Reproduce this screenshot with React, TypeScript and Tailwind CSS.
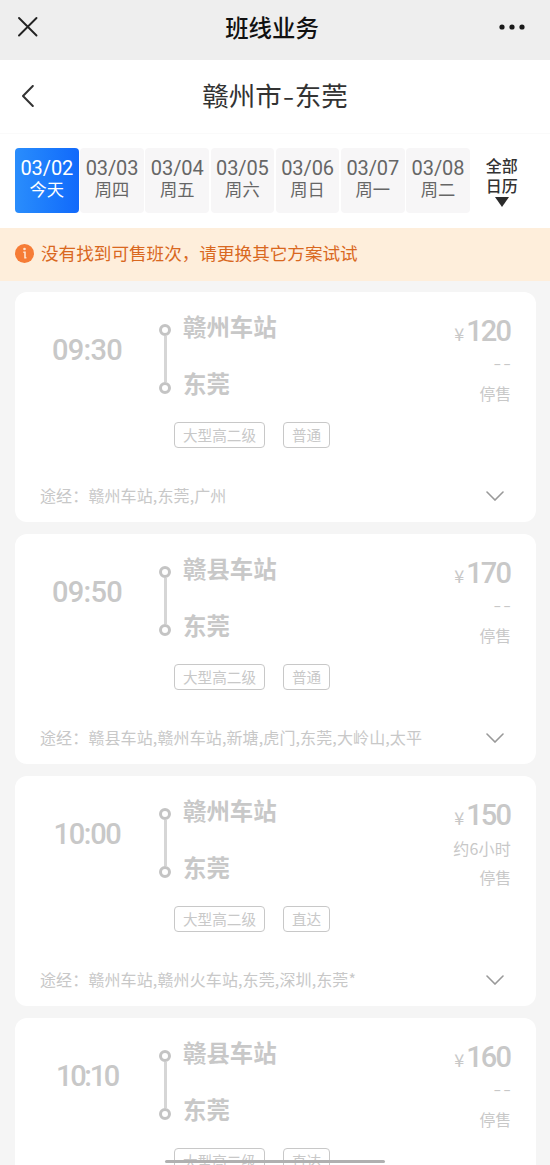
import React, { useState } from 'react';

interface DayItem {
  date: string;
  label: string;
}

interface Trip {
  time: string;
  from: string;
  to: string;
  price: number;
  duration: string;
  tags: string[];
  via: string;
}

const DAYS: DayItem[] = [
  { date: '03/02', label: '今天' },
  { date: '03/03', label: '周四' },
  { date: '03/04', label: '周五' },
  { date: '03/05', label: '周六' },
  { date: '03/06', label: '周日' },
  { date: '03/07', label: '周一' },
  { date: '03/08', label: '周二' },
];

const TRIPS: Trip[] = [
  { time: '09:30', from: '赣州车站', to: '东莞', price: 120, duration: '--', tags: ['大型高二级', '普通'], via: '赣州车站,东莞,广州' },
  { time: '09:50', from: '赣县车站', to: '东莞', price: 170, duration: '--', tags: ['大型高二级', '普通'], via: '赣县车站,赣州车站,新塘,虎门,东莞,大岭山,太平' },
  { time: '10:00', from: '赣州车站', to: '东莞', price: 150, duration: '约6小时', tags: ['大型高二级', '直达'], via: '赣州车站,赣州火车站,东莞,深圳,东莞*' },
  { time: '10:10', from: '赣县车站', to: '东莞', price: 160, duration: '--', tags: ['大型高二级', '直达'], via: '赣县车站,东莞' },
];

const TIME_TRACKING = ['tracking-[-0.700px]', 'tracking-[-1.300px]', 'tracking-[-2.300px]'];

const timeTracking = (time: string) => TIME_TRACKING[time.split('1').length - 1];

const TopBar: React.FC = () => (
  <div className="h-[60px] bg-[#eeeeee] flex items-center justify-between pl-[17px] pr-[25px] pb-[6px]">
    <svg className="w-[22px] h-[22px]" viewBox="0 0 22 22" fill="none" stroke="#222" strokeWidth={1.9} strokeLinecap="round">
      <path d="M2 2l17.5 17.5M19.500 2L2 19.500" />
    </svg>
    <h1 className="text-[23.400px] leading-8 font-medium text-[#111] ml-[6px]">班线业务</h1>
    <svg className="w-[26px] h-[6px]" viewBox="0 0 26 6" fill="#1a1a1a">
      <circle cx="3" cy="3" r="2.600" />
      <circle cx="13" cy="3" r="2.600" />
      <circle cx="23" cy="3" r="2.600" />
    </svg>
  </div>
);

const RouteHeader: React.FC = () => (
  <div className="h-[74px] bg-white border-b border-[#fafafa] grid grid-cols-[60px_1fr_60px] items-center">
    <svg className="w-3 h-[22px] ml-[22px] -mt-[2px]" viewBox="0 0 12 22" fill="none" stroke="#333" strokeWidth={2} strokeLinecap="round" strokeLinejoin="round">
      <path d="M10.800 1L1 11l9.800 10" />
    </svg>
    <h2 className="text-center text-[26.500px] leading-9 text-[#333] pb-[3px]">
      赣州市<span className="inline-block px-[2px] scale-x-125">-</span>东莞
    </h2>
  </div>
);

const DateStrip: React.FC = () => {
  const [selected, setSelected] = useState('03/02');

  return (
    <div className="h-[94px] bg-white flex pt-[14px] pl-[15px]">
      <div className="flex gap-[1.500px]">
        {DAYS.map((day) => (
          <button
            key={day.date}
            onClick={() => setSelected(day.date)}
            className={`w-[63.700px] h-[65px] rounded-[4px] flex flex-col items-center pt-[10px] ${
              day.date === selected ? 'bg-linear-to-r from-[#2a8dfc] to-[#1269fb] text-white' : 'bg-[#f7f6f7] text-[#666]'
            }`}
          >
            <span className="font-[Roboto] text-[20px] leading-5 tracking-[-0.100px]">{day.date}</span>
            <span className="text-[17.300px] leading-[21px]">{day.label}</span>
          </button>
        ))}
      </div>
      <button className="ml-[16px] w-8 flex flex-col items-center pt-[7px] h-[65px] text-[16px] leading-5 font-medium text-[#333]">
        <span>全部</span>
        <span>日历</span>
        <svg className="w-[14px] h-[10px] mt-[2px] shrink-0" viewBox="0 0 14 10" fill="#2b2b2b">
          <path d="M0 0h14L7 10z" />
        </svg>
      </button>
    </div>
  );
};

const Notice: React.FC = () => (
  <div className="h-[53px] bg-[#feeedb] flex items-center pl-[15px] pb-[2px] gap-[8px]">
    <svg className="w-[19px] h-[19px]" viewBox="0 0 19 19" fill="none">
      <circle cx="9.500" cy="9.500" r="9.500" fill="#f67c36" />
      <path d="M8.300 8.200h1.700v5.600h1.400" stroke="#fde3d0" strokeWidth={1.6} />
      <circle cx="9.500" cy="5" r="1.300" fill="#fde3d0" />
    </svg>
    <p className="text-[17.600px] leading-6 text-[#d9681f] -ml-px pb-[1px]">没有找到可售班次，请更换其它方案试试</p>
  </div>
);

const TripCard: React.FC<{ trip: Trip }> = ({ trip }) => (
  <div className="h-[230px] bg-white rounded-[12px] flex flex-col shrink-0">
    <div className="flex h-[130px]">
      <div className={`w-[144px] pt-[42px] text-center font-[Roboto] font-medium text-[29px] leading-8 ${timeTracking(trip.time)}`}>{trip.time}</div>
      <div className="flex flex-col items-center w-3 pt-[32px]">
        <span className="w-3 h-3 rounded-full border-[3px] border-[#c4c4c4]" />
        <span className="w-[3px] h-[46px] bg-[#d6d6d6]" />
        <span className="w-3 h-3 rounded-full border-[3px] border-[#c4c4c4]" />
      </div>
      <div className="ml-[12px] flex-1 pt-[17px] text-[23.400px] leading-[34px] font-bold">
        <p>{trip.from}</p>
        <p className="mt-[23px]">{trip.to}</p>
      </div>
      <div className="pr-[25px] pt-[23px] text-right">
        <p className="leading-8 whitespace-nowrap">
          <span className="text-[18px] mr-[2px]">¥</span>
          <span className="font-[Roboto] font-medium text-[29px] tracking-[-1.900px] mr-[1px]">{trip.price}</span>
        </p>
        {trip.duration === '--' ? (
          <p className="text-[15.800px] leading-6 mt-[1px]">
            <span className="inline-block origin-right scale-x-[1.400] tracking-[1.500px] -mr-[1.500px]">{trip.duration}</span>
          </p>
        ) : (
          <p className="text-[16px] leading-6 mt-[2px] tracking-[0.200px]">{trip.duration}</p>
        )}
        <p className={`text-[15.800px] leading-6 ${trip.duration === '--' ? 'mt-[7px]' : 'mt-[6px]'}`}>停售</p>
      </div>
    </div>
    <div className="flex gap-[18px] ml-[159px]">
      {trip.tags.map((tag) => (
        <span key={tag} className="h-[26px] px-[8px] border border-[#c8c8c8] rounded-[4px] text-[14.600px] leading-[23px]">{tag}</span>
      ))}
    </div>
    <div className="flex items-center justify-between mt-[37px] pl-[25px] pr-[32px]">
      <p className="text-[16px] leading-6 tracking-[0.120px] -mt-[2px]">途经：{trip.via}</p>
      <svg className="w-[18px] h-[10px]" viewBox="0 0 18 10" fill="none" stroke="#999" strokeWidth={1.6} strokeLinecap="round">
        <path d="M1 1l8 8 8-8" />
      </svg>
    </div>
  </div>
);

export default function App() {
  return (
    <div className="relative w-[550px] h-[1165px] overflow-hidden flex flex-col bg-[#f5f5f5] font-['Noto_Sans_CJK_SC',sans-serif]">
      <TopBar />
      <RouteHeader />
      <DateStrip />
      <Notice />
      <main className="flex-1 min-h-0 overflow-hidden flex flex-col gap-[12px] pt-[10.500px] pl-[15px] pr-[14px] text-[#c8c8c8]">
        {TRIPS.map((trip) => (
          <TripCard key={trip.time} trip={trip} />
        ))}
      </main>
      {/* home indicator */}
      <div className="absolute bottom-[2px] left-[165px] w-[220px] h-[3px] rounded-full bg-[#b0b0b0]" />
    </div>
  );
}
